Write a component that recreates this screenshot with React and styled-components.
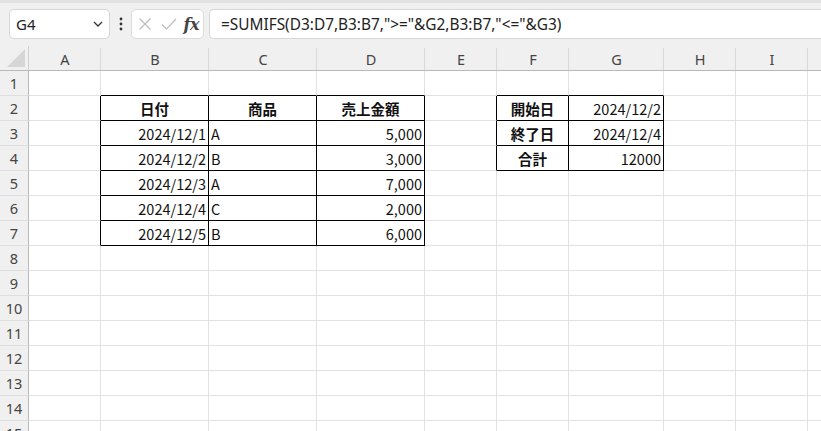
import React from "react";
import styled, { createGlobalStyle } from "styled-components";

const Global = createGlobalStyle`
  html, body { margin: 0; padding: 0; background: #f0f0f0; overflow: hidden; }
  body { font-family: "Noto Sans", "Noto Sans CJK JP", sans-serif; }
`;

const Page = styled.div`
  width: 821px;
  height: 431px;
  overflow: hidden;
  background: #f0f0f0;
`;

const Toolbar = styled.div`
  height: 46px;
  box-sizing: border-box;
  border-top: 3px solid #e2e2e2;
  padding: 6px 0 0 9px;
  display: flex;
  align-items: flex-start;
`;

const NameBox = styled.div`
  width: 101px;
  height: 30px;
  box-sizing: border-box;
  background: #fff;
  border: 1px solid #d6d6d6;
  border-radius: 5px;
  display: flex;
  align-items: center;
  justify-content: space-between;
  padding: 0 6px 0 6px;
  font-size: 15px;
  color: #222;
`;

const Dots = styled.div`
  width: 21px;
  height: 30px;
  display: flex;
  align-items: center;
  justify-content: center;
`;

const FuncBox = styled.div`
  width: 73px;
  height: 30px;
  box-sizing: border-box;
  background: #fff;
  border: 1px solid #dcdcdc;
  border-radius: 5px;
  display: flex;
  align-items: center;
  padding: 0 4px 0 5px;
  margin-right: 5px;
`;

const Fx = styled.span`
  font-family: "DejaVu Serif", "Liberation Serif", serif;
  font-style: italic;
  font-weight: bold;
  font-size: 16px;
  color: #444;
  margin-left: auto;
  letter-spacing: -0.5px;
`;

const FormulaBar = styled.div`
  flex: 1;
  height: 30px;
  box-sizing: border-box;
  background: #fff;
  border: 1px solid #d6d6d6;
  border-right: none;
  border-radius: 5px 0 0 5px;
  display: flex;
  align-items: center;
  padding-left: 11px;
  font-size: 15.4px;
  color: #222;
  white-space: nowrap;
`;

const Sheet = styled.div`
  display: grid;
  grid-template-columns: 29px 72px 108px 108px 108px 72px 72px 95px 72px 72px 40px;
  grid-auto-rows: 25px;
  grid-template-rows: 25px;
  background: #fff;
`;

const Corner = styled.div`
  background: #f0f0f0;
  border-bottom: 1px solid #b9b9b9;
  border-right: 1px solid #d0d0d0;
  box-sizing: border-box;
  display: flex;
  align-items: flex-end;
  justify-content: flex-end;
  padding: 0 3px 3px 0;
`;

const ColHeader = styled.div`
  background: #f0f0f0;
  box-sizing: border-box;
  border-bottom: 1px solid #b9b9b9;
  position: relative;
  display: flex;
  align-items: center;
  justify-content: center;
  font-size: 14.5px;
  color: #444;
  padding-top: 2px;
  &::after {
    content: "";
    position: absolute;
    right: 0;
    top: 2px;
    bottom: 0;
    width: 1px;
    background: #d9d9d9;
  }
`;

const RowHeader = styled.div`
  background: #f0f0f0;
  box-sizing: border-box;
  border-right: 1px solid #b9b9b9;
  border-bottom: 1px solid #dedede;
  display: flex;
  align-items: center;
  justify-content: center;
  font-size: 14.5px;
  color: #444;
`;

const Cell = styled.div`
  box-sizing: border-box;
  border-right: 1px solid ${(p) => (p.$rb ? "#000" : "#e1e1e1")};
  border-bottom: 1px solid ${(p) => (p.$bb ? "#000" : "#e1e1e1")};
  display: flex;
  align-items: center;
  justify-content: ${(p) =>
    p.$align === "center" ? "center" : p.$align === "right" ? "flex-end" : "flex-start"};
  padding: 0 2px 0 2px;
  font-family: "Noto Sans CJK JP", "Noto Sans", sans-serif;
  font-size: 14.5px;
  font-weight: ${(p) => (p.$bold ? 700 : 400)};
  color: #111;
  white-space: nowrap;
  overflow: hidden;
`;

const COLS = ["A", "B", "C", "D", "E", "F", "G", "H", "I", "J"];
const ROWS = 15;

const data = {
  B2: { v: "日付", b: true, a: "center" },
  C2: { v: "商品", b: true, a: "center" },
  D2: { v: "売上金額", b: true, a: "center" },
  B3: { v: "2024/12/1", a: "right" },
  B4: { v: "2024/12/2", a: "right" },
  B5: { v: "2024/12/3", a: "right" },
  B6: { v: "2024/12/4", a: "right" },
  B7: { v: "2024/12/5", a: "right" },
  C3: { v: "A" },
  C4: { v: "B" },
  C5: { v: "A" },
  C6: { v: "C" },
  C7: { v: "B" },
  D3: { v: "5,000", a: "right" },
  D4: { v: "3,000", a: "right" },
  D5: { v: "7,000", a: "right" },
  D6: { v: "2,000", a: "right" },
  D7: { v: "6,000", a: "right" },
  F2: { v: "開始日", b: true, a: "center" },
  F3: { v: "終了日", b: true, a: "center" },
  F4: { v: "合計", b: true, a: "center" },
  G2: { v: "2024/12/2", a: "right" },
  G3: { v: "2024/12/4", a: "right" },
  G4: { v: "12000", a: "right" },
};

const tables = [
  { c1: 1, c2: 3, r1: 2, r2: 7 },
  { c1: 5, c2: 6, r1: 2, r2: 4 },
];

const inTable = (r, c) =>
  tables.some((t) => r >= t.r1 && r <= t.r2 && c >= t.c1 && c <= t.c2);

const Chevron = () => (
  <svg width="10" height="6" viewBox="0 0 10 6">
    <path d="M1 1 L5 5 L9 1" fill="none" stroke="#333" strokeWidth="1.3" />
  </svg>
);

const VDots = () => (
  <svg width="4" height="14" viewBox="0 0 4 14">
    <circle cx="2" cy="2" r="1.4" fill="#333" />
    <circle cx="2" cy="7" r="1.4" fill="#333" />
    <circle cx="2" cy="12" r="1.4" fill="#333" />
  </svg>
);

const XIcon = () => (
  <svg width="14" height="14" viewBox="0 0 14 14" style={{ marginLeft: 1 }}>
    <path d="M1.5 1.5 L12.5 12.5 M12.5 1.5 L1.5 12.5" stroke="#bdbdbd" strokeWidth="1.2" fill="none" />
  </svg>
);

const CheckIcon = () => (
  <svg width="16" height="14" viewBox="0 0 16 14" style={{ marginLeft: 9 }}>
    <path d="M1 7.5 L5.5 12 L15 2" stroke="#bdbdbd" strokeWidth="1.2" fill="none" />
  </svg>
);

const CornerTri = () => (
  <svg width="18" height="18" viewBox="0 0 18 18">
    <path d="M18 0 L18 18 L0 18 Z" fill="#d6d6d6" />
  </svg>
);

export default function App() {
  const cells = [];
  cells.push(
    <Corner key="corner">
      <CornerTri />
    </Corner>
  );
  COLS.forEach((c) => cells.push(<ColHeader key={"h" + c}>{c === "J" ? "" : c}</ColHeader>));
  for (let r = 1; r <= ROWS; r++) {
    cells.push(<RowHeader key={"r" + r}>{r}</RowHeader>);
    COLS.forEach((c, ci) => {
      const d = data[c + r];
      const rb = inTable(r, ci) || inTable(r, ci + 1);
      const bb = inTable(r, ci) || inTable(r + 1, ci);
      cells.push(
        <Cell key={c + r} $rb={rb} $bb={bb} $align={d?.a} $bold={d?.b}>
          {d?.v}
        </Cell>
      );
    });
  }

  return (
    <Page>
      <Global />
      <Toolbar>
        <NameBox>
          <span>G4</span>
          <Chevron />
        </NameBox>
        <Dots>
          <VDots />
        </Dots>
        <FuncBox>
          <XIcon />
          <CheckIcon />
          <Fx>fx</Fx>
        </FuncBox>
        <FormulaBar>=SUMIFS(D3:D7,B3:B7,"&gt;="&amp;G2,B3:B7,"&lt;="&amp;G3)</FormulaBar>
      </Toolbar>
      <Sheet>{cells}</Sheet>
    </Page>
  );
}
